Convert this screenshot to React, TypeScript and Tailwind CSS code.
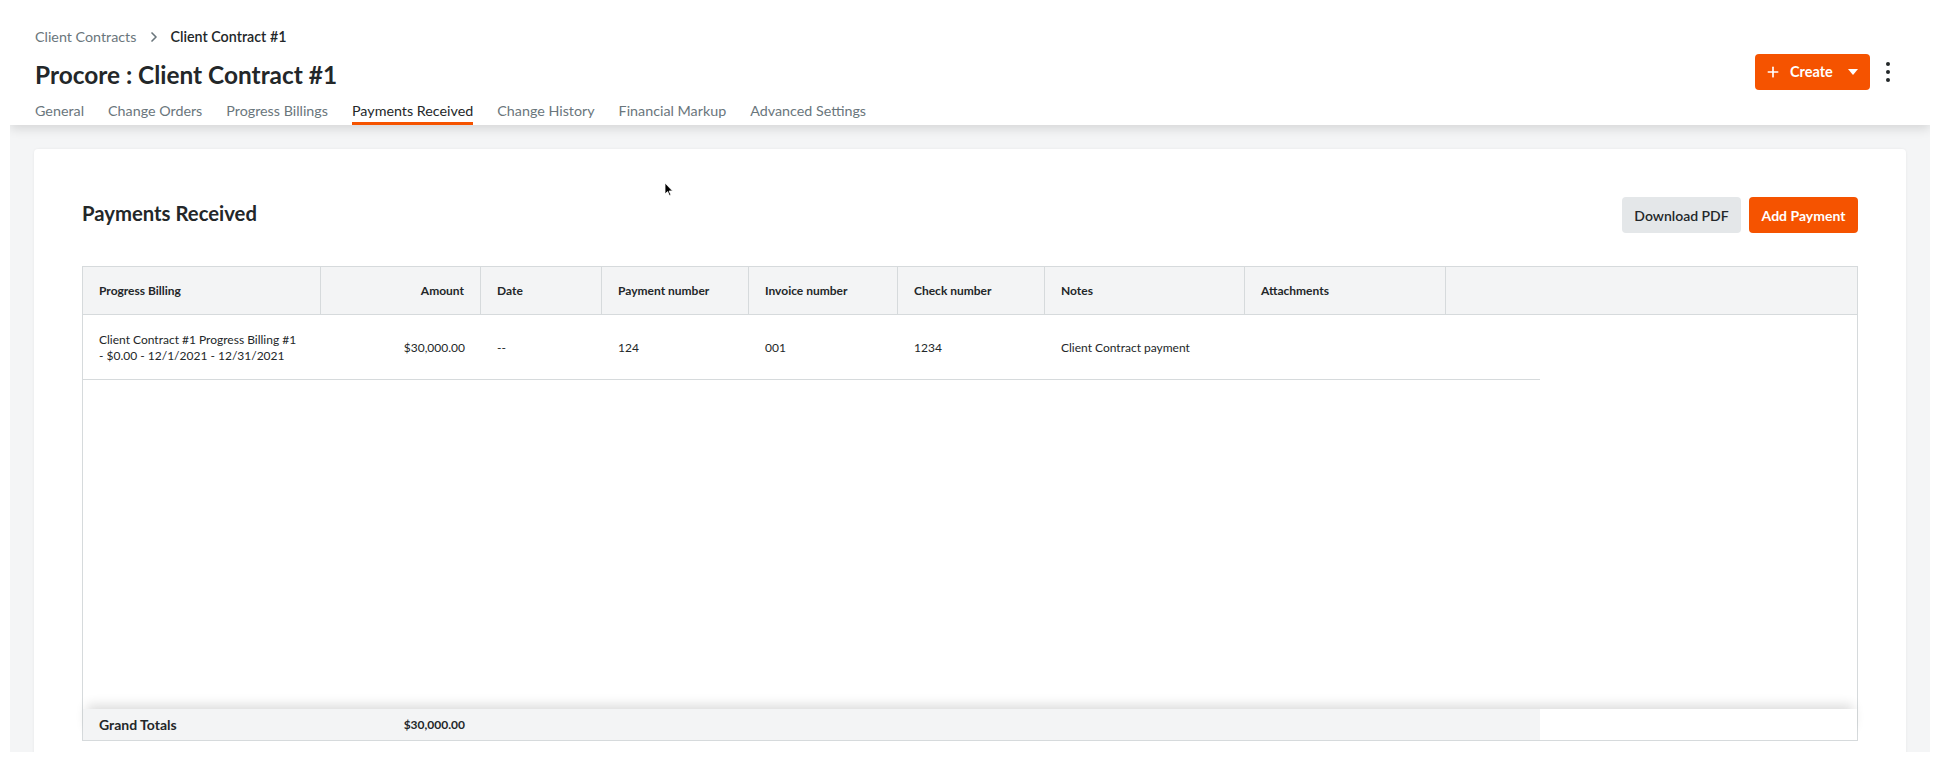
import { ChevronRight, Plus } from 'lucide-react';

const cols = 'grid-cols-[238px_160px_121px_147px_149px_147px_200px_201px_1fr]';
const rowCols = 'grid-cols-[238px_160px_121px_147px_149px_147px_200px_201px_93px]';

const tabs = [
  'General',
  'Change Orders',
  'Progress Billings',
  'Payments Received',
  'Change History',
  'Financial Markup',
  'Advanced Settings',
];

const headers = [
  { label: 'Progress Billing' },
  { label: 'Amount', right: true },
  { label: 'Date' },
  { label: 'Payment number' },
  { label: 'Invoice number' },
  { label: 'Check number' },
  { label: 'Notes' },
  { label: 'Attachments' },
  { label: '' },
];

function Header() {
  return (
    <header className="relative z-10 flex h-[115px] shrink-0 bg-white pl-[25px] pr-[40px] shadow-[0_4px_10px_rgba(0,0,0,0.12)]">
      <div className="flex flex-1 flex-col">
        <div className="mt-[17px] flex h-5 items-center text-[14.3px]">
          <span className="text-[#6a767c]">Client Contracts</span>
          <ChevronRight size={16} strokeWidth={2.5} className="ml-[10px] mr-[8px] text-[#6a767c]" />
          <span className="font-semibold text-[#232729]">Client Contract #1</span>
        </div>
        <h1 className="mt-[13px] h-[30px] text-[24.4px] font-bold leading-[30px] text-[#232729]">
          Procore : Client Contract #1
        </h1>
        <nav className="mt-auto flex gap-6 text-[14.3px]">
          {tabs.map(t => {
            const active = t === 'Payments Received';
            return (
              <div
                key={t}
                className={
                  active
                    ? 'border-b-[3px] border-[#f55300] pb-[1px] leading-5 text-[#232729]'
                    : 'border-b-[3px] border-transparent pb-[1px] leading-5 text-[#6a767c]'
                }
              >
                {t}
              </div>
            );
          })}
        </nav>
      </div>
      <div className="mt-[44px] flex h-9 items-center">
        <button className="flex h-9 w-[115px] items-center rounded-[4px] bg-[#f55300] pl-[10px] pr-[12px] text-[14.5px] font-bold text-white">
          <Plus size={16} strokeWidth={2.5} />
          <span className="ml-[9px]">Create</span>
          <svg width="10" height="6" viewBox="0 0 10 6" className="ml-auto">
            <path d="M0 0h10L5 6z" fill="white" />
          </svg>
        </button>
        <div className="ml-4 flex flex-col gap-[4px]">
          <span className="h-1 w-1 rounded-full bg-[#232729]" />
          <span className="h-1 w-1 rounded-full bg-[#232729]" />
          <span className="h-1 w-1 rounded-full bg-[#232729]" />
        </div>
      </div>
    </header>
  );
}

function PaymentsTable() {
  return (
    <div className="mt-[33px] flex h-[475px] flex-col border border-[#d6dadc] text-[12px] text-[#232729]">
      <div className={`grid ${cols} h-[48px] shrink-0 border-b border-[#d6dadc] bg-[#f3f4f5] font-bold`}>
        {headers.map((h, i) => (
          <div
            key={i}
            className={`flex items-center px-4 ${h.right ? 'justify-end' : ''} ${i < headers.length - 1 ? 'border-r border-[#d6dadc]' : ''}`}
          >
            {h.label}
          </div>
        ))}
      </div>
      <div className="flex-1 bg-white">
        <div className={`grid ${rowCols} h-[65px] w-[1457px] border-b border-[#d6dadc] leading-4`}>
          <div className="flex flex-col justify-center px-4 pt-[2px]">
            <span>Client Contract #1 Progress Billing #1</span>
            <span>- $0.00 - 12/1/2021 - 12/31/2021</span>
          </div>
          <div className="flex items-center justify-end px-4 pt-[2px]">$30,000.00</div>
          <div className="flex items-center px-4 pt-[2px]">--</div>
          <div className="flex items-center px-4 pt-[2px]">124</div>
          <div className="flex items-center px-4 pt-[2px]">001</div>
          <div className="flex items-center px-4 pt-[2px]">1234</div>
          <div className="flex items-center px-4 pt-[2px]">Client Contract payment</div>
          <div />
          <div />
        </div>
      </div>
      <div className="relative flex h-[31px] shrink-0 bg-white shadow-[0_-8px_12px_-4px_rgba(0,0,0,0.14)]">
        <div className={`grid ${rowCols} w-[1457px] bg-[#f3f4f5] font-bold`}>
          <div className="flex items-center px-4 text-[14px]">Grand Totals</div>
          <div className="flex items-center justify-end px-4">$30,000.00</div>
        </div>
      </div>
    </div>
  );
}

export default function App() {
  return (
    <div className="relative h-[763px] w-[1940px] bg-white p-[10px] font-['Lato',sans-serif] text-[#232729]">
      <div className="flex h-[742px] flex-col overflow-hidden bg-[#f4f5f6]">
        <Header />
        <main className="flex-1 px-6 pt-6">
          <section className="h-[620px] rounded-[4px] bg-white px-12 pt-12 shadow-[0_0_3px_rgba(0,0,0,0.06)]">
            <div className="flex h-9 items-center justify-between">
              <h2 className="-mt-1 text-[20.3px] font-bold">Payments Received</h2>
              <div className="flex gap-2">
                <button className="h-9 w-[119px] rounded-[4px] bg-[#e4e7e9] text-[14px] font-semibold text-[#232729]">
                  Download PDF
                </button>
                <button className="h-9 w-[109px] rounded-[4px] bg-[#f55300] text-[14px] font-bold text-white">
                  Add Payment
                </button>
              </div>
            </div>
            <PaymentsTable />
          </section>
        </main>
      </div>
      <svg width="10" height="15" viewBox="0 0 10 15" className="absolute left-[664px] top-[182px]">
        <path d="M1 1v11l2.6-2.4 1.8 4 1.5-.7-1.8-3.9H8.6z" fill="black" stroke="white" strokeWidth="0.8" />
      </svg>
    </div>
  );
}
